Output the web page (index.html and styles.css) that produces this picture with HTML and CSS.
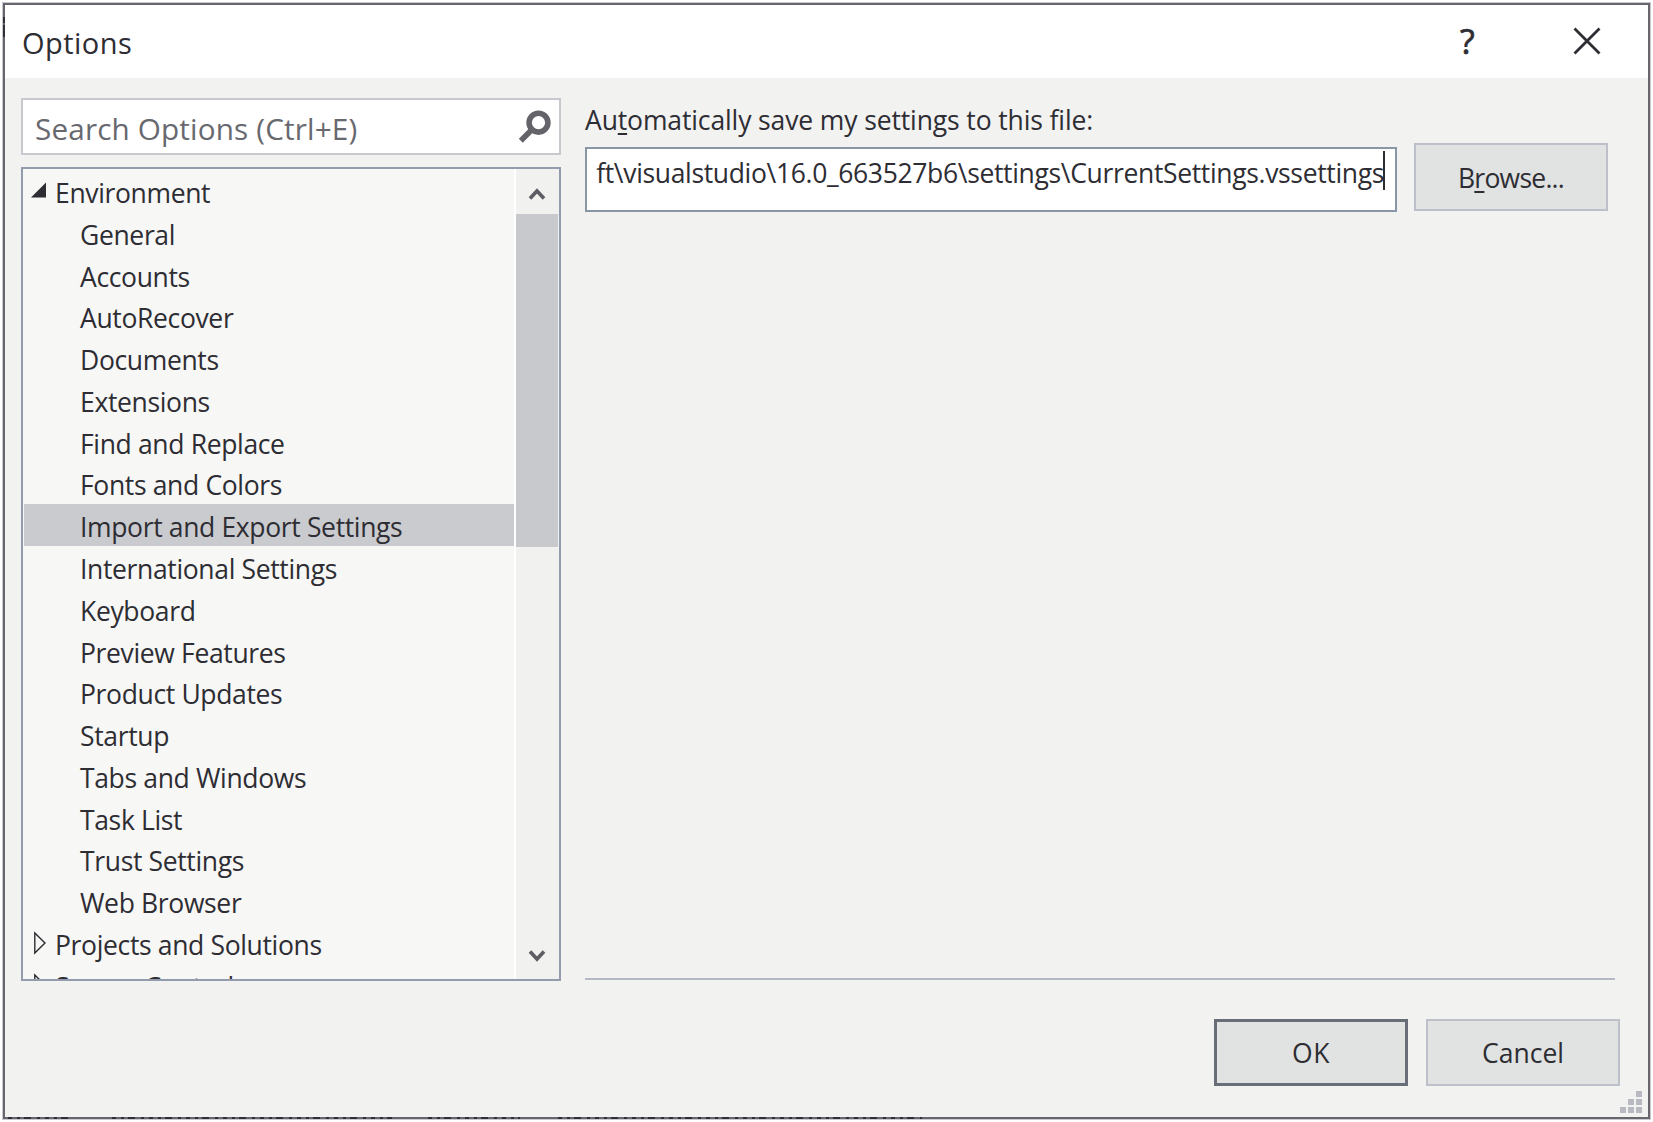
FILE: index.html
```html
<!DOCTYPE html>
<html lang="en">
<head>
<meta charset="utf-8">
<title>Options</title>
<link rel="stylesheet" href="styles.css">
</head>
<body>
<div class="dialog">
  <header class="titlebar">
    <h1 class="title">Options</h1>
    <span class="help">?</span>
    <svg class="close" width="28" height="28" viewBox="0 0 28 28"><path d="M1.5 1.5 26.5 26.5M26.5 1.5 1.5 26.5"/></svg>
  </header>
  <main class="content">
    <aside class="sidebar">
      <div class="search">
        <span>Search Options (Ctrl+E)</span>
        <svg class="lens" width="34" height="36" viewBox="0 0 34 36"><circle cx="20.5" cy="13.7" r="9.4"/><path d="M13.5 21 2.8 31.8"/></svg>
      </div>
      <div class="tree">
        <ul class="items">
          <li class="group"><svg class="arrow" width="16" height="24" viewBox="0 0 16 24"><path class="solid" d="M15 3.5V18.5H0z"/></svg>Environment</li>
          <li>General</li>
          <li>Accounts</li>
          <li>AutoRecover</li>
          <li>Documents</li>
          <li>Extensions</li>
          <li>Find and Replace</li>
          <li>Fonts and Colors</li>
          <li class="selected">Import and Export Settings</li>
          <li>International Settings</li>
          <li>Keyboard</li>
          <li>Preview Features</li>
          <li>Product Updates</li>
          <li>Startup</li>
          <li>Tabs and Windows</li>
          <li>Task List</li>
          <li>Trust Settings</li>
          <li>Web Browser</li>
          <li class="group"><svg class="arrow" width="16" height="24" viewBox="0 0 16 24"><path class="hollow" d="M3.8 2v20L14 12z"/></svg>Projects and Solutions</li>
          <li class="group next"><svg class="arrow" width="16" height="24" viewBox="0 0 16 24"><path class="hollow" d="M3.8 2v20L14 12z"/></svg>Source Control</li>
        </ul>
        <div class="scrollbar">
          <svg class="chevron" width="18" height="14" viewBox="0 0 18 14"><path d="M2 11.5 9 4l7 7.5"/></svg>
          <div class="thumb"></div>
          <svg class="chevron down" width="18" height="14" viewBox="0 0 18 14"><path d="M2 2.5 9 10l7-7.5"/></svg>
        </div>
      </div>
    </aside>
    <section class="page">
      <label class="label">Au<u>t</u>omatically save my settings to this file:</label>
      <div class="row">
        <div class="field"><div class="path"><span>microsoft\visualstudio\16.0_663527b6\settings\CurrentSettings.vssettings</span></div><i class="caret"></i></div>
        <button class="button browse"><span>B<u>r</u>owse...</span></button>
      </div>
    </section>
  </main>
  <footer class="actions">
    <button class="button primary">OK</button>
    <button class="button cancel">Cancel</button>
  </footer>
  <svg class="grip" width="22" height="22" viewBox="0 0 22 22"><path d="M16 0h6v6h-6zM8 8h6v6H8zM16 8h6v6h-6zM0 16h6v6H0zM8 16h6v6H8zM16 16h6v6h-6z"/></svg>
  <svg class="specks" width="1653" height="1122" viewBox="0 0 1653 1122"><path d="M8 1118H72M112 1118H392M428 1118H520M558 1118H922" stroke-dasharray="4 5 3 4 7 6 3 5"/><path d="M4 17v6M4 25v12"/></svg>
</div>
</body>
</html>
```
FILE: styles.css
```css
* { box-sizing: border-box; }

body {
  margin: 0;
  padding: 3px 2px 2px 3px;
  background: #fff;
  color: #2d2d33;
  font: 26.5px/1 "Open Sans", "Noto Sans", sans-serif;
  letter-spacing: -0.35px;
}

.dialog {
  position: relative;
  width: 1647px;
  height: 1116px;
  display: flex;
  flex-direction: column;
  border: 2px solid #66666c;
  outline: 1px solid #c9c9cf;
  background: #f2f2f1;
}

.titlebar {
  height: 73px;
  flex: none;
  display: flex;
  align-items: center;
  padding: 0 47px 0 17px;
  background: #fff;
}

.title {
  flex: 1;
  margin: 0;
  padding-top: 1px;
  font-size: 29px;
  font-weight: 400;
  letter-spacing: 0.45px;
}

.help {
  width: 17px;
  margin-right: 96px;
  padding-bottom: 2px;
  font-size: 34px;
  -webkit-text-stroke: 0.7px #2d2d33;
}

.close {
  margin-top: -1px;
  fill: none;
  stroke: #2d2d33;
  stroke-width: 2.8;
}

.content {
  flex: none;
  display: flex;
  gap: 24px;
  padding: 20px 0 0 16px;
}

.sidebar {
  width: 540px;
  flex: none;
}

.search {
  height: 57px;
  display: flex;
  align-items: center;
  justify-content: space-between;
  padding: 0 7px 0 12px;
  border: 2px solid #c8c9cf;
  background: #fff;
  color: #68696f;
  font-size: 29.7px;
  letter-spacing: 0.15px;
}

.search span { padding-top: 5px; }

.lens {
  fill: none;
  stroke: #636369;
  stroke-width: 5.6;
}

.tree {
  height: 814px;
  display: flex;
  margin-top: 12px;
  border: 2px solid #929cad;
  background: #f7f7f6;
  overflow: hidden;
}

.items {
  flex: 1;
  margin: 0 0 0 1px;
  padding: 1px 0 0;
  list-style: none;
}

.items li {
  height: 41.78px;
  display: flex;
  align-items: center;
  padding: 5px 0 0 56px;
  white-space: nowrap;
}

.items .group {
  padding-left: 7px;
  gap: 8px;
}

.items .next { padding-top: 6px; }

.items .selected { background: #cacbcf; }

.arrow { margin-top: -4px; }
.solid { fill: #2d2d33; }
.hollow { fill: none; stroke: #2d2d33; stroke-width: 1.4; }

.scrollbar {
  width: 45px;
  display: flex;
  flex-direction: column;
  align-items: center;
  padding: 18px 1px 16px 0;
  border-left: 2px solid #fff;
  background: #f1f1f0;
}

.chevron {
  flex: none;
  fill: none;
  stroke: #5d5d63;
  stroke-width: 3.6;
}

.thumb {
  width: 42px;
  height: 333px;
  margin-top: 13px;
  background: #c8c9cc;
}

.down { margin-top: auto; }

.page {
  width: 1030px;
  height: 882px;
  display: flex;
  flex-direction: column;
  border-bottom: 2px solid #b4b9c4;
}

.label {
  padding-top: 9px;
  height: 45px;
  letter-spacing: -0.12px;
}

u {
  text-decoration-thickness: 2px;
  text-underline-offset: 3px;
}

.row {
  display: flex;
  gap: 17px;
}

.field {
  width: 812px;
  height: 65px;
  display: flex;
  margin-top: 4px;
  padding: 2px 10px 0 9px;
  border: 2px solid #8996a5;
  background: #fff;
}

.path {
  flex: 1;
  height: 44px;
  display: flex;
  justify-content: flex-end;
  align-items: center;
  margin-right: -1px;
  overflow: hidden;
  white-space: nowrap;
  letter-spacing: -0.34px;
}

.caret {
  width: 2px;
  height: 39px;
  background: #2d2d33;
}

.button {
  width: 194px;
  height: 67px;
  padding: 2px 0 0;
  border: 2px solid #bdc0c8;
  border-radius: 0;
  background: #e1e3e2;
  color: inherit;
  font: inherit;
  letter-spacing: inherit;
}

.browse {
  height: 68px;
  padding-top: 3px;
  letter-spacing: -0.75px;
}

.actions {
  display: flex;
  justify-content: flex-end;
  gap: 18px;
  padding: 38px 28px 0 0;
}

.primary {
  border: 3px solid #696d77;
  letter-spacing: 0.5px;
}

.cancel { letter-spacing: 0; }

.grip {
  position: absolute;
  right: 6px;
  bottom: 4px;
  fill: #b9bac1;
}

.specks {
  position: absolute;
  left: -5px;
  top: -5px;
  fill: none;
  stroke: #303036;
  stroke-width: 2;
}
```
